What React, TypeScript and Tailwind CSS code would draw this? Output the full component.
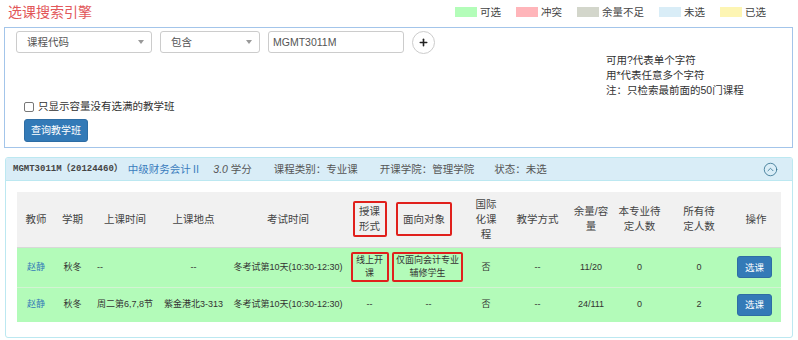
import React from 'react';
import { Plus, CircleChevronUp } from 'lucide-react';

const legend = [
  { label: '可选', swatch: 'bg-[#b3fdb9]' },
  { label: '冲突', swatch: 'bg-[#ffb5ba]' },
  { label: '余量不足', swatch: 'bg-[#d3d6cb]' },
  { label: '未选', swatch: 'bg-[#d9edf7]' },
  { label: '已选', swatch: 'bg-[#fdf5b3]' },
];

function Caret() {
  return (
    <svg width="6" height="4" viewBox="0 0 6 4" className="ml-auto">
      <path d="M0 0h6L3 4z" fill="#999" />
    </svg>
  );
}

function App() {
  return (
    <div className="w-[798px] h-[340px] overflow-hidden bg-white text-[10.5px] leading-[15px] text-[#333] font-['Liberation_Sans','Noto_Sans_CJK_SC',sans-serif]">
      {/* title + legend */}
      <div className="flex items-center h-[27px] pl-[8px] pb-[3px]">
        <h1 className="text-[14px] leading-[20px] text-[#e2575a] font-normal">选课搜索引擎</h1>
        <div className="ml-auto mr-[32px] flex items-center">
          {legend.map((l) => (
            <div key={l.label} className="flex items-center ml-[15px] first:ml-0">
              <span className={`w-[22px] h-[10px] ${l.swatch}`} />
              <span className="ml-[3px] text-[#444]">{l.label}</span>
            </div>
          ))}
        </div>
      </div>

      {/* search box */}
      <div className="ml-[4px] w-[789px] h-[121px] border border-[#a3c5ea] pl-[11px] pt-[3px]">
        <div className="flex items-center h-[22px]">
          <div className="w-[136px] h-[22px] flex items-center border border-[#ccc] rounded-[3px] pl-[10px] pr-[7px] text-[#555]">
            课程代码
            <Caret />
          </div>
          <div className="ml-[8px] w-[100px] h-[22px] flex items-center border border-[#ccc] rounded-[3px] pl-[10px] pr-[7px] text-[#555]">
            包含
            <Caret />
          </div>
          <div className="ml-[8px] w-[136px] h-[22px] flex items-center border border-[#ccc] rounded-[3px] pl-[4px] text-[#555]">
            MGMT3011M
          </div>
          <button className="ml-[8px] w-[23px] h-[23px] rounded-full border border-[#ccc] bg-white flex items-center justify-center">
            <Plus size={11} strokeWidth={3.5} color="#222" />
          </button>
        </div>
        <div className="ml-[590px] text-[#333]">
          <div>可用?代表单个字符</div>
          <div>用*代表任意多个字符</div>
          <div>注：只检索最前面的50门课程</div>
        </div>
        <div className="ml-[8px] mt-[1px] flex items-center">
          <span className="w-[10px] h-[10px] border border-[#777] rounded-[2px] bg-white" />
          <span className="ml-[4px]">只显示容量没有选满的教学班</span>
        </div>
        <button className="ml-[8px] mt-[5px] w-[64px] h-[23px] rounded-[3px] bg-[#337ab7] border border-[#2e6da4] text-white text-[10px]">
          查询教学班
        </button>
      </div>

      {/* course panel */}
      <div className="mt-[9px] ml-[5px] w-[788px] h-[181px] border border-[#bce8f1] rounded-[3px] overflow-hidden">
        <div className="h-[23px] bg-[#d9edf7] border-b border-[#bce8f1] flex items-center pl-[7px] pr-[14px] text-[#555]">
          <span className="font-['Liberation_Mono','Noto_Sans_CJK_SC',monospace] text-[9px] font-semibold text-[#444]">MGMT3011M（20124460）</span>
          <span className="ml-[5px] text-[#3a7cbd]">中级财务会计Ⅱ</span>
          <span className="ml-[12px]"><i>3.0</i> 学分</span>
          <span className="ml-[22px]">课程类别：专业课</span>
          <span className="ml-[22px]">开课学院：管理学院</span>
          <span className="ml-[20px]">状态：未选</span>
          <CircleChevronUp size={15} strokeWidth={1.3} color="#31708f" className="ml-auto" />
        </div>
        <div className="px-[11px] pt-[11px]">
          <table className="w-[764px] table-fixed border-collapse">
            <colgroup>
              <col className="w-[38px]" />
              <col className="w-[35px]" />
              <col className="w-[70px]" />
              <col className="w-[67px]" />
              <col className="w-[122px]" />
              <col className="w-[41px]" />
              <col className="w-[77px]" />
              <col className="w-[38px]" />
              <col className="w-[65px]" />
              <col className="w-[42px]" />
              <col className="w-[55px]" />
              <col className="w-[64px]" />
              <col className="w-[50px]" />
            </colgroup>
            <thead>
              <tr className="h-[55px] bg-[#f1f1f1] text-[#444] border-b border-[#d8d8d8]">
                <th className="font-normal">教师</th>
                <th className="font-normal">学期</th>
                <th className="font-normal">上课时间</th>
                <th className="font-normal">上课地点</th>
                <th className="font-normal">考试时间</th>
                <th className="font-normal">
                  <div className="mx-auto w-[34px] h-[36px] border-2 border-[#e0201c] rounded-[2px] flex items-center justify-center">
                    授课<br />形式
                  </div>
                </th>
                <th className="font-normal">
                  <div className="ml-[6px] w-[56px] h-[34px] border-2 border-[#e0201c] rounded-[2px] flex items-center justify-center">
                    面向对象
                  </div>
                </th>
                <th className="font-normal">国际<br />化课<br />程</th>
                <th className="font-normal">教学方式</th>
                <th className="font-normal whitespace-nowrap">余量/容<br />量</th>
                <th className="font-normal whitespace-nowrap">本专业待<br />定人数</th>
                <th className="font-normal whitespace-nowrap">所有待<br />定人数</th>
                <th className="font-normal">操作</th>
              </tr>
            </thead>
            <tbody className="text-[9px] leading-[13px] text-center bg-[#b3fbb9]">
              <tr className="h-[40px]">
                <td className="text-[#337ab7]">赵静</td>
                <td>秋冬</td>
                <td className="text-left pl-[7px]">--</td>
                <td>--</td>
                <td>冬考试第10天(10:30-12:30)</td>
                <td>
                  <div className="mx-auto w-[38px] h-[30px] border-2 border-[#e0201c] rounded-[2px] flex items-center justify-center">
                    线上开<br />课
                  </div>
                </td>
                <td>
                  <div className="ml-[2px] w-[71px] h-[30px] border-2 border-[#e0201c] rounded-[2px] flex items-center justify-center">
                    仅面向会计专业<br />辅修学生
                  </div>
                </td>
                <td>否</td>
                <td>--</td>
                <td>11/20</td>
                <td>0</td>
                <td>0</td>
                <td>
                  <button className="w-[35px] h-[22px] rounded-[3px] bg-[#337ab7] border border-[#2e6da4] text-white text-[9.5px] -ml-[3px]">选课</button>
                </td>
              </tr>
              <tr className="h-[35px] border-t border-[#d3f3d3]">
                <td className="text-[#337ab7]">赵静</td>
                <td>秋冬</td>
                <td className="text-left pl-[7px] whitespace-nowrap">周二第6,7,8节</td>
                <td className="whitespace-nowrap">紫金港北3-313</td>
                <td>冬考试第10天(10:30-12:30)</td>
                <td>--</td>
                <td>--</td>
                <td>否</td>
                <td>--</td>
                <td>24/111</td>
                <td>0</td>
                <td>2</td>
                <td>
                  <button className="w-[35px] h-[22px] rounded-[3px] bg-[#337ab7] border border-[#2e6da4] text-white text-[9.5px] -ml-[3px]">选课</button>
                </td>
              </tr>
            </tbody>
          </table>
        </div>
      </div>
    </div>
  );
}

export default App;
